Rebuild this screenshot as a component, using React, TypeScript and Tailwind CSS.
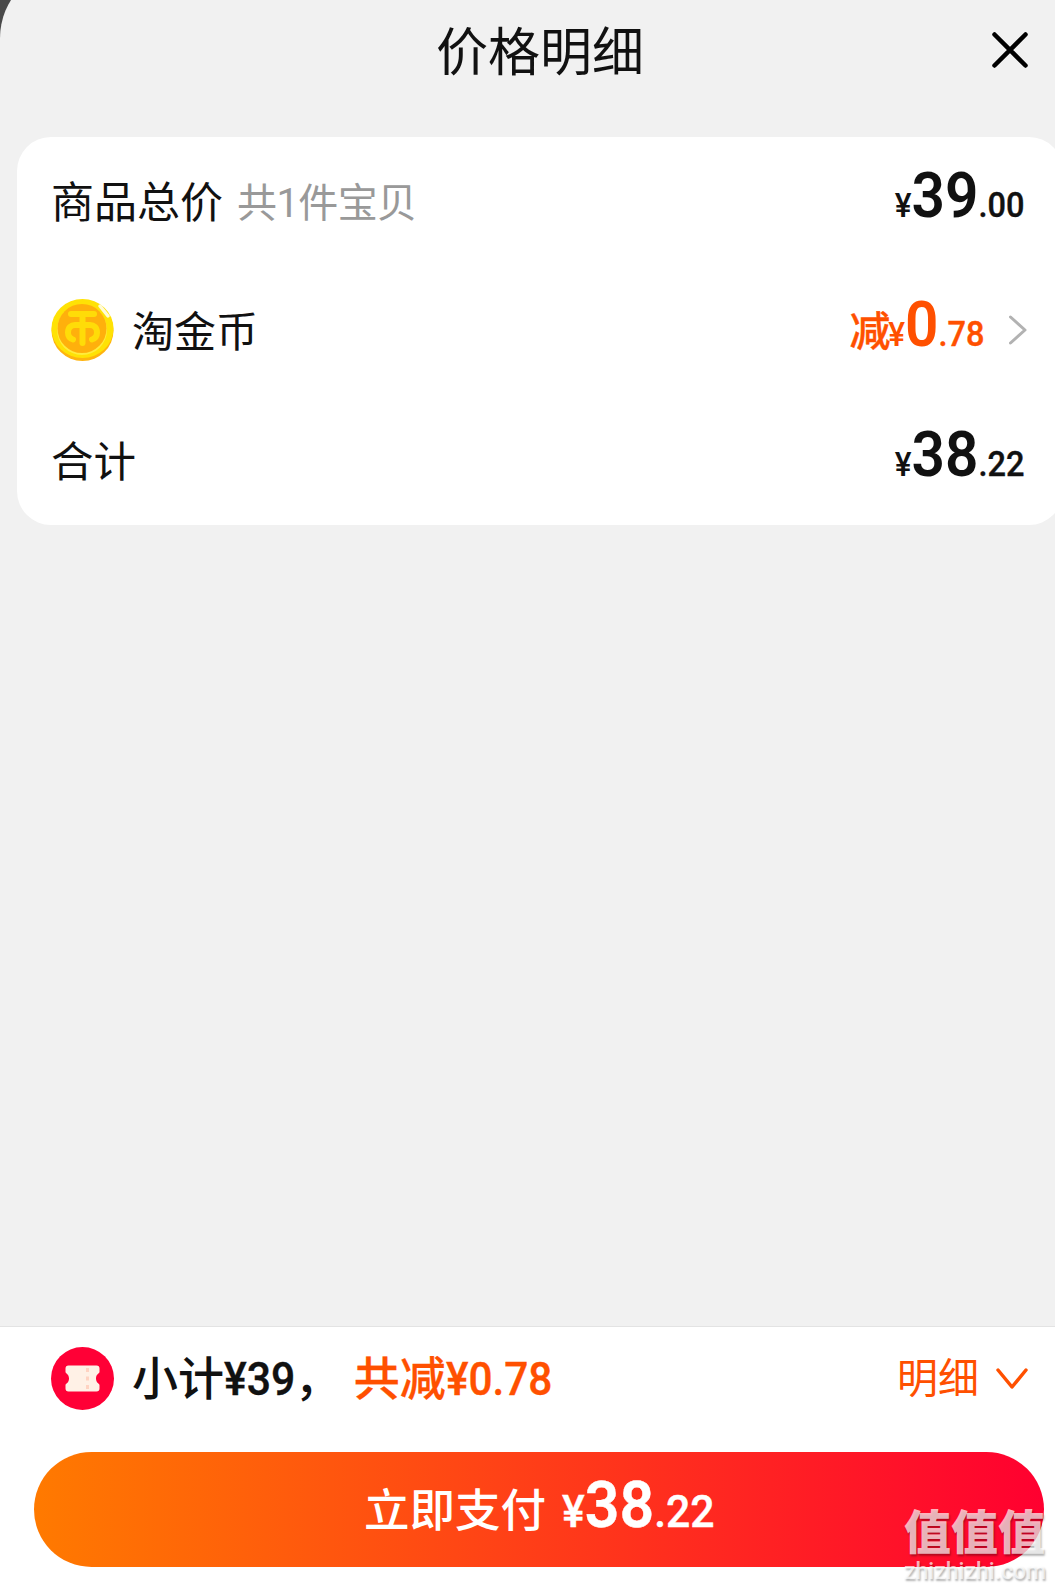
import clsx from 'clsx';

interface PriceProps {
    prefix?: string;
    whole: string;
    cents: string;
    className?: string;
}

const Price = ({ prefix, whole, cents, className }: PriceProps) => {
    return (
        <div className={clsx('flex items-baseline font-medium leading-none whitespace-nowrap pb-[13px]', className)}>
            {prefix && <span className="-mr-[9px] text-[41px] [-webkit-text-stroke:0.4px]">{prefix}</span>}
            {/* Narrow digits */}
            <span className="flex items-baseline origin-right scale-x-[0.93]">
                <span className="text-[34px]">¥</span>
                <span className="text-[63px] font-semibold">{whole}</span>
                <span className="text-[35px] [-webkit-text-stroke:0.4px]">.{cents}</span>
            </span>
        </div>
    );
};

const CoinIcon = () => (
    <svg className="w-[63px] h-[62px] -mt-[2px]" viewBox="0 0 63 62" fill="none">
        <ellipse cx="31.5" cy="31.5" rx="31" ry="30.5" fill="#ffb40f" />
        <ellipse cx="31.5" cy="29.5" rx="31" ry="29.5" fill="#ffe205" />
        <circle cx="31" cy="31" r="25" fill="#ffec3d" />
        <circle cx="31" cy="29.500" r="24.500" fill="#ffb00c" />
        <g stroke="#ffdc08" strokeWidth="6" strokeLinecap="round" strokeLinejoin="round">
            <path d="M20 15H43" />
            <path d="M31.500 15V44" />
            <path d="M22 40.500c-3-1-5-3.500-5-7c0-5 3-7.500 7-7.500h15c4 0 7 2.500 7 7.500c0 3.500-2 6-5 7" />
        </g>
        <path d="M49 7l8 10" stroke="#fffbd8" strokeWidth="3.500" strokeLinecap="round" />
    </svg>
);

const CouponIcon = () => (
    <svg className="w-[63px] h-[63px] -mt-[2px]" viewBox="0 0 63 63">
        <circle cx="31.500" cy="31.500" r="31.500" fill="#ff0036" />
        <path
            d="M17 18.500H45.500a3 3 0 0 1 3 3V25c0 1.500-3.500 2-3.500 6.500S48.500 36.500 48.500 38V41.500a3 3 0 0 1-3 3H17.500a3 3 0 0 1-3-3V38c0-1.500 3.500-2 3.500-6.500S14.500 26.500 14.500 25V21.500a3 3 0 0 1 3-3Z"
            fill="#fff1e6"
        />
        <path d="M36.500 21v4M36.500 29.500v4M36.500 38v4" stroke="#ffd3c2" strokeWidth="3" />
    </svg>
);

const App = () => {
    return (
        <div className="w-[1055px] h-[1589px] overflow-hidden bg-[#4a4a4a] font-['Roboto','Noto_Sans_CJK_SC',sans-serif] text-[#111111]">
            <div className="flex flex-col w-[1080px] h-[1622px] -mt-[33px] pt-[33px] rounded-tl-[71px] bg-[#f1f1f1]">
                {/* Header */}
                <div className="flex items-center h-[137px] pb-[37px] pl-[436px] pr-[52px]">
                    <h1 className="pt-[7px] text-[52px] leading-none whitespace-nowrap">价格明细</h1>
                    <button type="button" aria-label="关闭" className="ml-auto">
                        <svg className="w-[36px] h-[36px]" viewBox="0 0 36 36" fill="none" stroke="#000" strokeWidth="4.500" strokeLinecap="round">
                            <path d="M2.500 2.500L33.500 33.500M33.500 2.500L2.500 33.500" />
                        </svg>
                    </button>
                </div>

                {/* Price breakdown */}
                <div className="mx-[17px] h-[388px] shrink-0 rounded-[34px] bg-white pl-[34px] pr-[38px]">
                    <div className="flex items-center justify-between h-[129px]">
                        <div className="flex items-center gap-[14px] pt-[4px] leading-none">
                            <span className="text-[43px]">商品总价</span>
                            <span className="text-[40px] tracking-[-0.6px] text-[#999999]">共1件宝贝</span>
                        </div>
                        <Price whole="39" cents="00" />
                    </div>
                    <div className="flex items-center h-[130px]">
                        <CoinIcon />
                        <span className="ml-[18px] pt-[3px] text-[42px] leading-none">淘金币</span>
                        <Price prefix="减" whole="0" cents="78" className="ml-auto text-[#ff5000]" />
                        <svg className="ml-[24px] -mr-[2px] -mt-[3px] w-[18px] h-[30px]" viewBox="0 0 18 30" fill="none" stroke="#b2b2b2" strokeWidth="3" strokeLinecap="round" strokeLinejoin="round">
                            <path d="M1.500 2L16 15L1.500 28" />
                        </svg>
                    </div>
                    <div className="flex items-center justify-between h-[129px]">
                        <span className="pt-[5px] text-[42.5px] leading-none">合计</span>
                        <Price whole="38" cents="22" />
                    </div>
                </div>

                {/* Checkout bar */}
                <div className="mt-auto h-[263px] border-t border-[#e3e3e3] bg-white">
                    <div className="flex items-center h-[125px] pb-[21px] pl-[51px] pr-[52px] leading-none whitespace-nowrap">
                        <CouponIcon />
                        <div className="flex items-baseline ml-[18px] text-[46px] font-medium">
                            <span>小计</span>
                            <span className="origin-left scale-x-[0.93] -mr-[6px] [-webkit-text-stroke:0.4px]">¥39</span>
                            <span>，</span>
                        </div>
                        <div className="flex items-baseline ml-[13px] text-[46px] font-medium text-[#ff5000]">
                            <span className="[-webkit-text-stroke:0.3px]">共减</span>
                            <span className="origin-left scale-x-[0.92] [-webkit-text-stroke:0.4px]">¥0.78</span>
                        </div>
                        <button type="button" className="ml-auto flex items-center gap-[17px] text-[#ff5000]">
                            <span className="text-[41px]">明细</span>
                            <svg className="w-[32px] h-[22px]" viewBox="0 0 32 22" fill="none" stroke="#ff5000" strokeWidth="3.500" strokeLinecap="round" strokeLinejoin="round">
                                <path d="M2 2L16 19L30 2" />
                            </svg>
                        </button>
                    </div>
                    <button
                        type="button"
                        className="flex items-baseline w-[1010px] h-[115px] ml-[34px] pl-[330px] pt-[22px] rounded-full bg-[linear-gradient(90deg,#ff7a00,#ff0030)] text-white font-medium leading-none whitespace-nowrap"
                    >
                        <span className="text-[45.5px]">立即支付</span>
                        <span className="flex items-baseline ml-[16px] origin-left scale-x-[0.95] text-[45px] [-webkit-text-stroke:0.4px]">
                            <span>¥</span>
                            <span className="text-[64px] font-semibold">38</span>
                            <span>.22</span>
                        </span>
                    </button>
                </div>
            </div>

            {/* Site mark over the corner of the button */}
            <div className="absolute left-[904px] top-[1509px] flex flex-col gap-[4px] text-white/70 leading-none whitespace-nowrap [text-shadow:1px_2px_2px_rgb(0_0_0/0.3)]">
                <span className="text-[47px] font-black">值值值</span>
                <span className="text-[23px] font-medium">zhizhizhi.com</span>
            </div>
        </div>
    );
};

export default App;
